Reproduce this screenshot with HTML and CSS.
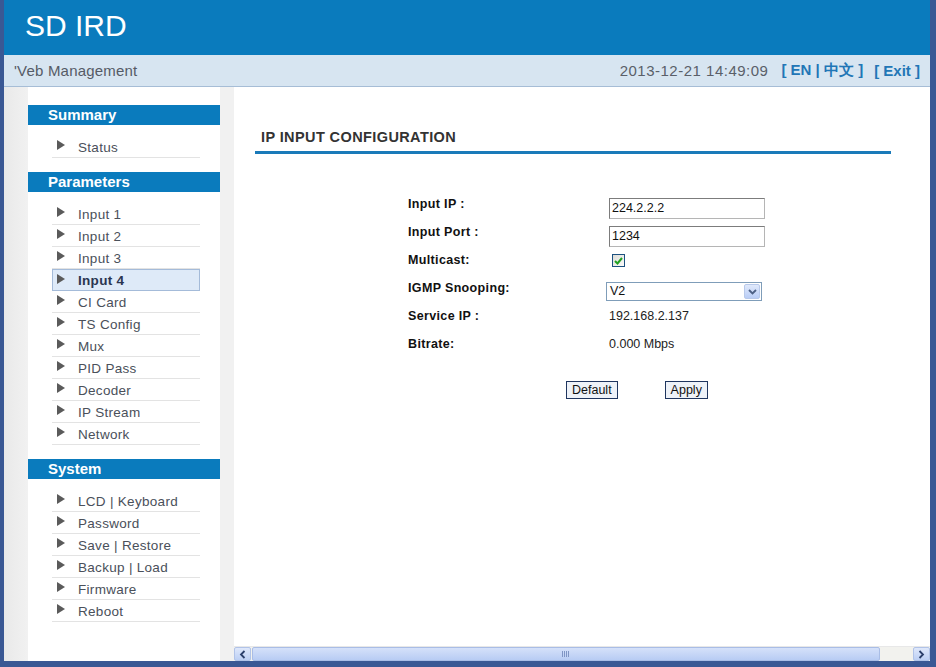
FILE: index.html
```html
<!DOCTYPE html>
<html>
<head>
<meta charset="utf-8">
<link rel="stylesheet" href="styles.css">
</head>
<body>
<div class="window">
  <header class="top">
    <div class="brand">SD IRD</div>
  </header>
  <div class="subbar">
    <div class="sub-left">'Veb Management</div>
    <div class="sub-right">
      <span class="clock">2013-12-21 14:49:09</span>
      <span class="lnk">[ EN | 中文 ]</span>
      <span class="lnk">[ Exit ]</span>
    </div>
  </div>
  <div class="main">
    <aside class="leftframe">
      <div class="menu">
        <div class="mhead">Summary</div>
        <ul class="mlist">
          <li><span class="tri"></span>Status</li>
        </ul>
        <div class="mhead">Parameters</div>
        <ul class="mlist">
          <li><span class="tri"></span>Input 1</li>
          <li><span class="tri"></span>Input 2</li>
          <li><span class="tri"></span>Input 3</li>
          <li class="active"><span class="tri"></span>Input 4</li>
          <li><span class="tri"></span>CI Card</li>
          <li><span class="tri"></span>TS Config</li>
          <li><span class="tri"></span>Mux</li>
          <li><span class="tri"></span>PID Pass</li>
          <li><span class="tri"></span>Decoder</li>
          <li><span class="tri"></span>IP Stream</li>
          <li><span class="tri"></span>Network</li>
        </ul>
        <div class="mhead">System</div>
        <ul class="mlist">
          <li><span class="tri"></span>LCD | Keyboard</li>
          <li><span class="tri"></span>Password</li>
          <li><span class="tri"></span>Save | Restore</li>
          <li><span class="tri"></span>Backup | Load</li>
          <li><span class="tri"></span>Firmware</li>
          <li><span class="tri"></span>Reboot</li>
        </ul>
      </div>
    </aside>
    <section class="rightframe">
      <div class="content">
        <h1 class="ptitle">IP INPUT CONFIGURATION</h1>
        <div class="form">
          <div class="lbl">Input IP :</div>
          <div class="val"><span class="tbox">224.2.2.2</span></div>
          <div class="lbl">Input Port :</div>
          <div class="val"><span class="tbox">1234</span></div>
          <div class="lbl">Multicast:</div>
          <div class="val"><span class="chk"><svg width="9" height="8" viewBox="0 0 9 8"><path d="M1 4 L3.5 6.5 L8 1" fill="none" stroke="#21a121" stroke-width="2"/></svg></span></div>
          <div class="lbl">IGMP Snooping:</div>
          <div class="val"><span class="sel"><span class="seltxt">V2</span><span class="selbtn"><svg width="9" height="6" viewBox="0 0 9 6"><path d="M1 1 L4.5 4.5 L8 1" fill="none" stroke="#4d6185" stroke-width="1.8"/></svg></span></span></div>
          <div class="lbl">Service IP :</div>
          <div class="val txt">192.168.2.137</div>
          <div class="lbl">Bitrate:</div>
          <div class="val txt">0.000 Mbps</div>
        </div>
        <div class="btns">
          <span class="btn">Default</span>
          <span class="btn">Apply</span>
        </div>
      </div>
      <div class="hscroll">
        <span class="arr"><svg width="7" height="9" viewBox="0 0 7 9"><path d="M5.5 1 L2 4.5 L5.5 8" fill="none" stroke="#2b3f6b" stroke-width="1.8"/></svg></span>
        <span class="thumb"><span class="grip"></span></span>
        <span class="track"></span>
        <span class="arr"><svg width="7" height="9" viewBox="0 0 7 9"><path d="M1.5 1 L5 4.5 L1.5 8" fill="none" stroke="#2b3f6b" stroke-width="1.8"/></svg></span>
      </div>
    </section>
  </div>
</div>
</body>
</html>
```
FILE: styles.css
```css
* { box-sizing: border-box; }
html, body { margin: 0; padding: 0; }
body { font-family: "Liberation Sans", Arial, sans-serif; background: #fff; }

.window {
  width: 936px;
  height: 667px;
  border-left: 4px solid #3a5894;
  border-right: 6px solid #3a5894;
  border-bottom: 6px solid #3a5894;
  display: flex;
  flex-direction: column;
  overflow: hidden;
}

.top {
  height: 55px;
  background: #0a7bbd;
  flex: none;
  display: flex;
  align-items: center;
  padding-left: 21px;
}
.brand {
  color: #fff;
  font-size: 30px;
  line-height: 30px;
  margin-top: -3px;
}

.subbar {
  height: 32px;
  flex: none;
  background: #d7e5f1;
  border-bottom: 1px solid #a6bdd6;
  display: flex;
  align-items: center;
  justify-content: space-between;
  padding: 0 10px 0 10px;
  font-size: 15px;
}
.sub-left { color: #555b66; letter-spacing: 0.2px; }
.sub-right { display: flex; gap: 11px; align-items: center; }
.clock { color: #5a5f69; margin-right: 2px; letter-spacing: 0.5px; }
.lnk { color: #2176b6; font-weight: bold; }

.main {
  flex: 1;
  display: flex;
  min-height: 0;
}

.leftframe {
  width: 230px;
  flex: none;
  background: linear-gradient(to right, #e9e9e9, #f1f1f1 24px);
  padding-left: 24px;
  padding-right: 14px;
}
.menu {
  background: #fff;
  height: 100%;
  padding-top: 18px;
}
.mhead {
  background: #0a7bbd;
  color: #fff;
  font-weight: bold;
  font-size: 15px;
  height: 20px;
  line-height: 20px;
  padding-left: 20px;
}
.mlist {
  list-style: none;
  margin: 11px 0 14px 24px;
  padding: 0;
  width: 148px;
}
.mlist li {
  height: 22px;
  line-height: 21px;
  border-bottom: 1px solid #e3e3e3;
  color: #4a505a;
  font-size: 13.5px;
  letter-spacing: 0.3px;
  display: flex;
  align-items: center;
  padding-left: 5px;
  padding-top: 1px;
}
.mlist li.active {
  background: #deeaf8;
  border: 1px solid #a4bbd9;
  font-weight: bold;
  color: #2a3550;
  padding-left: 4px;
}
.tri {
  width: 0;
  height: 0;
  border-top: 5px solid transparent;
  border-bottom: 5px solid transparent;
  border-left: 8px solid #5a5a5a;
  margin-right: 13px;
  margin-top: -4px;
}

.rightframe {
  flex: 1;
  display: flex;
  flex-direction: column;
  background: #fff;
  min-width: 0;
}
.content {
  flex: 1;
  padding: 39px 39px 0 21px;
}
.ptitle {
  margin: 0;
  font-size: 14.5px;
  font-weight: bold;
  color: #333;
  letter-spacing: 0.4px;
  padding-left: 6px;
  height: 28px;
  line-height: 22px;
  border-bottom: 3px solid #1a7ab9;
}
.form {
  display: grid;
  grid-template-columns: 201px 160px;
  grid-auto-rows: 28px;
  margin: 42px 0 0 153px;
}
.lbl {
  font-size: 12.5px;
  font-weight: bold;
  color: #111;
  letter-spacing: 0.35px;
  line-height: 16px;
}
.val { position: relative; }
.val.txt { font-size: 12.5px; color: #222; line-height: 16px; }
.tbox {
  display: block;
  width: 156px;
  height: 21px;
  border: 1px solid #8c8c8c;
  border-color: #7c7c7c #b5b5b5 #b5b5b5 #7c7c7c;
  font-size: 12.5px;
  line-height: 19px;
  padding-left: 2px;
  margin-top: 2px;
  color: #111;
}
.chk {
  display: flex;
  align-items: center;
  justify-content: center;
  width: 13px;
  height: 13px;
  border: 1px solid #1d5180;
  background: linear-gradient(135deg, #dcdcd7, #fbfbfa);
  margin: 2px 0 0 3px;
}
.sel {
  display: flex;
  width: 156px;
  height: 19px;
  border: 1px solid #7f9db9;
  margin: 2px 0 0 -3px;
  font-size: 12.5px;
}
.seltxt { flex: 1; line-height: 17px; padding-left: 3px; color: #111; }
.selbtn {
  width: 16px;
  margin: 1px;
  background: linear-gradient(#e0e9fb, #b9cdf6);
  border: 1px solid #b8c9ea;
  border-radius: 2px;
  display: flex;
  align-items: center;
  justify-content: center;
}
.btns {
  display: flex;
  gap: 47px;
  margin: 17px 0 0 311px;
}
.btn {
  border: 1px solid #1f355f;
  background: #eef2f8;
  font-size: 12.5px;
  color: #111;
  height: 18px;
  line-height: 16px;
  padding: 0 5px;
}

.hscroll {
  height: 15px;
  flex: none;
  display: flex;
  background: #f2f2ee;
  border-top: 1px solid #e8e8e8;
}
.arr {
  width: 17px;
  background: linear-gradient(#dfe8fb, #bccff4);
  border: 1px solid #b1c3e8;
  border-radius: 2px;
  display: flex;
  align-items: center;
  justify-content: center;
}
.thumb {
  width: 628px;
  margin-left: 1px;
  background: linear-gradient(#d5e1fa, #b8ccf4);
  border: 1px solid #a9bde6;
  border-radius: 2px;
  display: flex;
  align-items: center;
  justify-content: center;
}
.grip {
  width: 8px;
  height: 6px;
  background: repeating-linear-gradient(to right, #7f95c4 0 1px, transparent 1px 2px);
}
.track { flex: 1; }
```
